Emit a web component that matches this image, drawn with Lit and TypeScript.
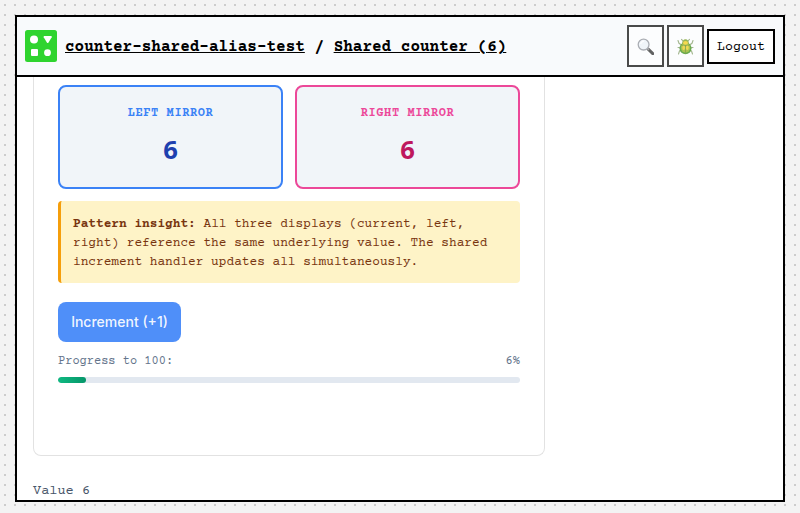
import { LitElement, html, css, svg } from "lit";
import { customElement, property } from "lit/decorators.js";

@customElement("mirror-card")
class MirrorCard extends LitElement {
  @property() label = "";
  @property({ type: Number }) value = 0;
  static styles = css`
    :host {
      display: flex; flex-direction: column; align-items: center;
      flex: 1; box-sizing: border-box; height: 104px; padding-top: 19px;
      border: 2px solid #3b82f6; border-radius: 8px; background: #f1f5f9;
      color: #3b82f6;
    }
    :host([tone="pink"]) { border-color: #ec4899; color: #ec4899; }
    .label { font-size: 12px; line-height: 16px; font-weight: 700; letter-spacing: 0.6px; text-transform: uppercase; }
    .value { margin-top: 11px; font: 700 25.6px/34px "Noto Sans", sans-serif; color: #1e40af; }
    :host([tone="pink"]) .value { color: #be185d; }
  `;
  render() {
    return html`<div class="label">${this.label}</div><div class="value">${this.value}</div>`;
  }
}

const magnifier = svg`
  <path d="M11.2 11.2 L15.8 15.6" stroke="#222" stroke-width="3" stroke-linecap="round"/>
  <path d="M10 10 L12 11.9" stroke="#888" stroke-width="1.6"/>
  <circle cx="6.6" cy="6.6" r="5.4" fill="#eef3f9" stroke="#8a8e96" stroke-width="1.3"/>
  <path d="M3.6 6 Q4.3 3.4 7 3.2" fill="none" stroke="#fff" stroke-width="1.2"/>`;

const beetle = svg`
  <g fill="none" stroke="#7f9a62" stroke-width="1.1" stroke-linecap="round">
    <path d="M6.2 3.2 L4.5 1.3 M10.8 3.2 L12.5 1.3"/>
    <path d="M4.5 7 L2 5.3 L1 2.5 M12.5 7 L15 5.3 L16 2.5"/>
    <path d="M4 9.6 L1 9.5 M13 9.6 L16 9.5"/>
    <path d="M4.4 12 L2.5 13 L1.5 16 M12.6 12 L14.5 13 L15.5 16"/>
  </g>
  <ellipse cx="8.5" cy="10.2" rx="6" ry="6" fill="#2f8a08"/>
  <ellipse cx="8.5" cy="9.8" rx="4.6" ry="5" fill="#8cae08"/>
  <path d="M5 5.8 Q5.4 1.3 8.5 1.3 Q11.6 1.3 12 5.8 Q8.5 7.8 5 5.8Z" fill="#6f9a0c"/>
  <ellipse cx="8.5" cy="4.9" rx="2.5" ry="1.8" fill="#f6cc08"/>
  <path d="M8.5 7 V16 M4.2 7 Q8.5 8.7 12.8 7" stroke="#4d7a08" stroke-width=".7" fill="none"/>
  <ellipse cx="6.7" cy="9.8" rx="1.4" ry="2.2" fill="#eccb10"/>
  <ellipse cx="10.3" cy="9.8" rx="1.4" ry="2.2" fill="#eccb10"/>`;

@customElement("app-root")
class AppRoot extends LitElement {
  @property({ type: Number }) count = 6;
  static styles = css`
    :host {
      display: block; box-sizing: border-box; height: 513px; padding: 15px 15px 11px; overflow: hidden;
      font-family: "Courier Prime", Courier, "Courier New", "Liberation Mono", monospace;
      background: conic-gradient(from 270deg at 2px 2px, #ccc 90deg, #f3f3f3 0) 4px 4px / 10px 10px;
    }
    * { box-sizing: border-box; }
    .frame { display: flex; flex-direction: column; height: 487px; border: 2px solid #000; background: #fff; overflow: hidden; }
    header { display: flex; align-items: center; flex: none; height: 60px; padding: 0 8px; border-bottom: 2px solid #000; background: #f8fafc; }
    .logo { display: block; width: 32px; height: 32px; margin-right: 8px; }
    .crumbs { flex: 1; padding-top: 2px; font-size: 16px; line-height: 24px; font-weight: 700; white-space: pre; color: #000; }
    .crumbs a { color: inherit; text-decoration: underline; }
    .actions { display: flex; align-items: center; gap: 3px; }
    button { display: flex; align-items: center; justify-content: center; padding: 0; margin: 0; font-family: inherit; }
    .tool { width: 37px; height: 42px; border: 2px solid #000; background: #fff; opacity: .7; }
    .tool svg { display: block; width: 17px; height: 17px; }
    .logout { width: 68px; height: 35px; padding-top: 3px; border: 2px solid #000; background: #fff; color: #000; font-size: 13.333px; }
    main { flex: 1; min-height: 0; padding: 0 16px; overflow: hidden; }
    .card { width: 512px; height: 379px; padding: 8px 24px 0; border: 1px solid #e2e2e2; border-top: 0; border-radius: 0 0 8px 8px; }
    .mirrors { display: flex; gap: 12px; }
    .insight { height: 82px; margin: 12px 0 19px; padding: 14px 12px 0; border-left: 3px solid #f59e0b; border-radius: 4px; background: #fef3c7; color: #78350f; font-size: 12.8px; line-height: 19px; }
    .increment { width: 123px; height: 40px; border: 0; border-radius: 8px; background: #4f8ff9; color: rgba(255, 255, 255, .93); font: 500 14px/20px Inter, sans-serif; }
    .progress { display: flex; justify-content: space-between; margin-top: 11px; font-size: 12px; line-height: 17px; color: #64748b; }
    .track { height: 6px; margin-top: 7px; border-radius: 3px; background: #e2e8f0; overflow: hidden; }
    .fill { height: 6px; border-radius: 3px; background: linear-gradient(90deg, #10b981, #059669); }
    .status { margin-top: 25px; font-size: 13.6px; line-height: 20px; color: #475569; }
  `;
  render() {
    return html`<div class="frame">
      <header>
        <svg class="logo" viewBox="0 0 32 32"><rect width="32" height="32" rx="2.5" fill="#2fd42f"/><g fill="#fff"><circle cx="9" cy="9.5" r="4"/><path d="M19.2 6 H26.2 Q27.2 6.2 26.7 7.2 L23.4 12.7 Q22.7 13.4 22 12.7 L18.7 7.2 Q18.3 6.2 19.2 6Z"/><rect x="6" y="19" width="7" height="7" rx="1"/><circle cx="22.5" cy="22.7" r="3.4"/></g></svg>
        <div class="crumbs"><a>counter-shared-alias-test</a> / <a>Shared counter (${this.count})</a></div>
        <div class="actions">
          <button class="tool" aria-label="Search"><svg viewBox="0 0 17 17">${magnifier}</svg></button>
          <button class="tool" aria-label="Debug"><svg viewBox="0 0 17 17">${beetle}</svg></button>
          <button class="logout">Logout</button>
        </div>
      </header>
      <main>
        <section class="card">
          <div class="mirrors">
            <mirror-card label="Left mirror" .value=${this.count}></mirror-card>
            <mirror-card tone="pink" label="Right mirror" .value=${this.count}></mirror-card>
          </div>
          <div class="insight"><strong>Pattern insight:</strong> All three displays (current, left, right) reference the same underlying value. The shared increment handler updates all simultaneously.</div>
          <button class="increment">Increment (+1)</button>
          <div class="progress"><span>Progress to 100:</span><span>${this.count}%</span></div>
          <div class="track"><div class="fill" style="width:${this.count}%"></div></div>
        </section>
        <div class="status">Value ${this.count}</div>
      </main>
    </div>`;
  }
}
